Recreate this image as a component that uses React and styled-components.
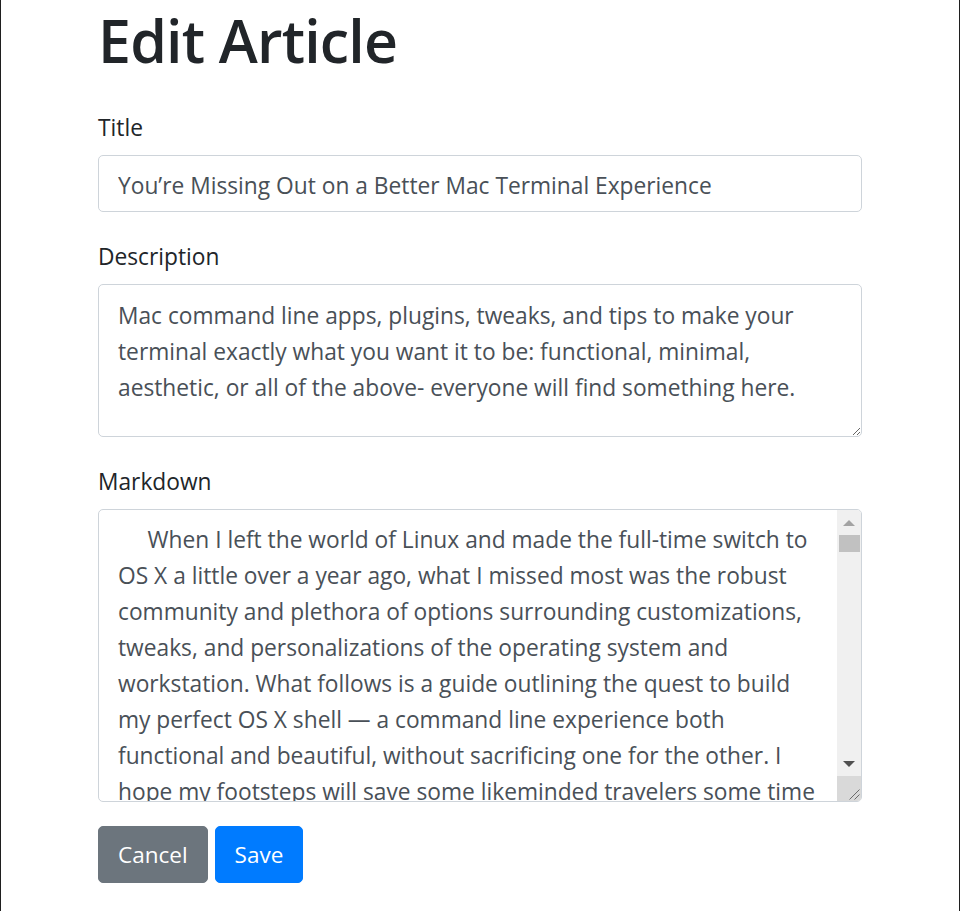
import React from "react";
import styled, { createGlobalStyle } from "styled-components";

const GlobalStyle = createGlobalStyle`
  html, body { margin: 0; padding: 0; background: #fff; }
  body { font-family: "Open Sans", "Noto Sans", sans-serif; color: #212529; }
  *, *::before, *::after { box-sizing: border-box; }
`;

const Page = styled.div`
  min-height: 100vh;
  border-left: 1px solid #1f1f1f;
  border-right: 1px solid #1f1f1f;
`;

const Container = styled.main`
  width: 764px;
  margin: 0 auto;
`;

const Heading = styled.h1`
  margin: 0 0 28px;
  font-size: 59px;
  line-height: 81px;
  font-weight: 600;
  letter-spacing: -0.8px;
  color: #212529;
`;

const Group = styled.div`
  margin-bottom: ${(p) => p.$gap}px;
`;

const Label = styled.label`
  display: block;
  margin-bottom: 10px;
  font-size: 22.75px;
  line-height: 35px;
  padding-top: 1px;
  color: #212529;
`;

const fieldBase = `
  display: block;
  width: 100%;
  font-family: "Open Sans", "Noto Sans", sans-serif;
  font-size: 22.75px;
  line-height: 36px;
  color: #495057;
  background: #fff;
  border: 1px solid #ced4da;
  border-radius: 5px;
  outline: none;
  white-space: pre-wrap;
`;

const Input = styled.input`
  ${fieldBase}
  height: 57px;
  padding: 3px 19px 0;
`;

const TextArea = styled.textarea`
  ${fieldBase}
  height: ${(p) => p.$h}px;
  padding: ${(p) => p.$pt}px ${(p) => p.$pr}px 12px 19px;
  resize: ${(p) => p.$resize};
  overflow: hidden;
`;

const FieldWrap = styled.div`
  position: relative;
`;

const ScrollBar = styled.div`
  position: absolute;
  top: 1px;
  right: 1px;
  bottom: 1px;
  width: 24px;
  display: flex;
  flex-direction: column;
  background: #f0f0f0;
  border-top-right-radius: 4px;
  border-bottom-right-radius: 4px;
  overflow: hidden;
  pointer-events: none;
`;

const ArrowButton = styled.div`
  height: 24px;
  flex: none;
  display: flex;
  align-items: center;
  justify-content: center;
`;

const Track = styled.div`
  flex: 1;
  padding: 1px 1px 0 2px;
`;

const Thumb = styled.div`
  height: 17px;
  background: #c1c1c1;
`;

const Corner = styled.div`
  height: 25px;
  flex: none;
  background: #d9d9d9;
  display: flex;
  align-items: flex-end;
  justify-content: flex-end;
`;

const Actions = styled.div`
  display: flex;
  gap: 7px;
`;

const Button = styled.button`
  height: 57px;
  padding: 1px 19px 0;
  font-family: "Open Sans", "Noto Sans", sans-serif;
  font-size: 22.5px;
  line-height: 36px;
  color: #fff;
  border: 1px solid ${(p) => (p.$variant === "primary" ? "#007bff" : "#6c757d")};
  background: ${(p) => (p.$variant === "primary" ? "#007bff" : "#6c757d")};
  border-radius: 5px;
  cursor: pointer;
`;

const intro = [
  "     When I left the world of Linux and made the full-time switch to",
  "OS X a little over a year ago, what I missed most was the robust",
  "community and plethora of options surrounding customizations,",
  "tweaks, and personalizations of the operating system and",
  "workstation. What follows is a guide outlining the quest to build",
  "my perfect OS X shell \u2014 a command line experience both",
  "functional and beautiful, without sacrificing one for the other. I",
  "hope my footsteps will save some likeminded travelers some time",
  "and energy on their own journey.",
].join("\n");

const paragraphs = [
  intro,
  "## Terminal Emulator",
  "The default Terminal.app that ships with OS X is perfectly serviceable, but it lacks many of the features that power users have come to expect. iTerm2 is a free and open source replacement that brings split panes, a hotkey window, search, autocomplete, paste history, instant replay, configurable profiles, and a whole lot more.",
  "## Shell",
  "Bash is fine, but zsh is better. Zsh ships with OS X, so switching is as easy as changing your login shell. Pair it with a framework such as Oh My Zsh or Prezto to get sensible defaults, hundreds of plugins, and a library of themes.",
  "## Prompt",
  "A good prompt tells you where you are and what is going on without getting in the way. Pure is a minimal, fast, and pretty prompt that shows the current path, git branch and status, and the execution time of long running commands.",
  "## Fonts",
  "A beautiful terminal deserves a beautiful typeface. Patched fonts from the Nerd Fonts project add thousands of glyphs and icons to popular programming fonts like Hack, Fira Code, Source Code Pro, and Inconsolata.",
  "## Color Schemes",
  "Solarized, Dracula, Nord, Gruvbox, One Dark, Tomorrow Night \u2014 there is no shortage of lovingly designed color schemes for iTerm2.",
  "## Command Line Apps",
  "Homebrew is the missing package manager for OS X. A few favorites: tmux, fzf, ripgrep, bat, exa, htop, tldr, and httpie.",
  "## Conclusion",
  "There is no single perfect setup, only the one that is perfect for you. Take what you like from this guide, leave the rest, and keep tinkering.",
];

const markdown = paragraphs.join("\n\n");

const description = [
  "Mac command line apps, plugins, tweaks, and tips to make your",
  "terminal exactly what you want it to be: functional, minimal,",
  "aesthetic, or all of the above- everyone will find something here.",
].join("\n");

function UpIcon() {
  return (
    <svg width="24" height="24" viewBox="0 0 24 24">
      <path d="M6 16H18L12 10Z" fill="#a3a3a3" />
    </svg>
  );
}

function DownIcon() {
  return (
    <svg width="24" height="24" viewBox="0 0 24 24">
      <path d="M6 9H18L12 15Z" fill="#505050" />
    </svg>
  );
}

function GripIcon() {
  return (
    <svg width="24" height="25" viewBox="0 0 24 25">
      <path
        d="M22.5 13.5L12.5 23.5M22.5 18.5L17.5 23.5"
        stroke="#6a6a6a"
        strokeWidth="1"
        fill="none"
      />
    </svg>
  );
}

export default function App() {
  return (
    <>
      <GlobalStyle />
      <Page>
        <Container>
          <Heading>Edit Article</Heading>
          <form onSubmit={(e) => e.preventDefault()}>
            <Group $gap={26}>
              <Label htmlFor="title">Title</Label>
              <Input
                id="title"
                defaultValue="You’re Missing Out on a Better Mac Terminal Experience"
              />
            </Group>
            <Group $gap={26}>
              <Label htmlFor="description">Description</Label>
              <TextArea
                id="description"
                $h={153}
                $pt={13}
                $pr={19}
                $resize="vertical"
                defaultValue={description}
              />
            </Group>
            <Group $gap={24}>
              <Label htmlFor="markdown">Markdown</Label>
              <FieldWrap>
                <TextArea
                  id="markdown"
                  $h={293}
                  $pt={12}
                  $pr={26}
                  $resize="none"
                  defaultValue={markdown}
                />
                <ScrollBar aria-hidden="true">
                  <ArrowButton>
                    <UpIcon />
                  </ArrowButton>
                  <Track>
                    <Thumb />
                  </Track>
                  <ArrowButton>
                    <DownIcon />
                  </ArrowButton>
                  <Corner>
                    <GripIcon />
                  </Corner>
                </ScrollBar>
              </FieldWrap>
            </Group>
            <Actions>
              <Button type="button" $variant="secondary">Cancel</Button>
              <Button type="submit" $variant="primary">Save</Button>
            </Actions>
          </form>
        </Container>
      </Page>
    </>
  );
}
